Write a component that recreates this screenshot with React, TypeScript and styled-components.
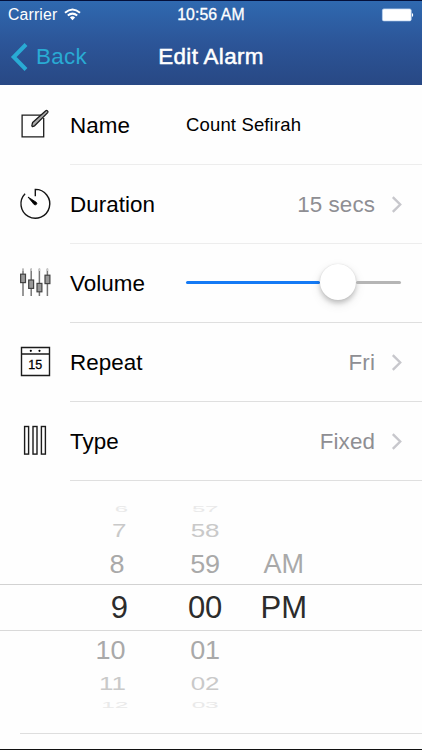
import React from "react";
import styled, { createGlobalStyle } from "styled-components";

const GlobalStyle = createGlobalStyle`
  * { box-sizing: border-box; }
  html, body { margin: 0; background: #fff; overflow: hidden; }
  body { font-family: "Liberation Sans", Arial, Helvetica, sans-serif; color: #000; }
  svg { display: block; flex: none; }
`;

const Screen = styled.main`
  width: 422px;
  height: 750px;
  display: flex;
  flex-direction: column;
  border-bottom: 1px solid #111;
  overflow: hidden;
  background: #fefefe;
`;

const Header = styled.header`
  height: 85px;
  flex: none;
  border-top: 1px solid #04103a;
  background: linear-gradient(#2f69b0, #2c5598 50%, #284884);
  color: #fff;
`;

const StatusBar = styled.div`
  height: 28px;
  display: grid;
  grid-template-columns: 1fr auto 1fr;
  align-items: center;
  padding: 0 8px;
  font-size: 15.8px;
  line-height: 20px;
`;

const Carrier = styled.div`
  display: flex;
  align-items: center;
  gap: 7px;
  letter-spacing: 0.15px;

  svg {
    margin-bottom: 2px;
  }
`;

const Clock = styled.time`
  -webkit-text-stroke: 0.3px #fff;
  letter-spacing: 0.1px;
`;

const Battery = styled.div`
  justify-self: end;
`;

const NavBar = styled.nav`
  height: 56px;
  display: grid;
  grid-template-columns: 1fr auto 1fr;
  align-items: center;
  padding: 0 10px;
`;

const BackButton = styled.button`
  display: flex;
  align-items: center;
  gap: 8px;
  padding: 0;
  border: 0;
  background: none;
  color: #29abd4;
  font: 22.4px/28px "Liberation Sans", Arial, sans-serif;
  letter-spacing: 0.3px;
`;

const Title = styled.h1`
  margin: 0;
  font-size: 22.4px;
  line-height: 28px;
  font-weight: 400;
  letter-spacing: 0.35px;
  -webkit-text-stroke: 0.5px #fff;
`;

const Row = styled.section<{ $height: number }>`
  height: ${(p) => p.$height}px;
  flex: none;
  display: grid;
  grid-template-columns: 70px 1fr;
`;

const IconCell = styled.div`
  display: flex;
  align-items: center;
  padding: 0 0 1px 17px;
`;

const RowBody = styled.div<{ $line: string }>`
  display: flex;
  align-items: center;
  border-bottom: 1.4px solid ${(p) => p.$line};
  padding-right: 20px;
`;

const Label = styled.div`
  width: 116px;
  font-size: 22.4px;
  line-height: 28px;
  letter-spacing: 0.05px;
  padding-top: 2px;
`;

const NameValue = styled.div`
  font-size: 18.5px;
  line-height: 24px;
  letter-spacing: 0.15px;
`;

const Detail = styled.div`
  margin-left: auto;
  display: flex;
  align-items: center;
  gap: 16px;
  padding-top: 2px;
  color: #8e8e93;
  font-size: 22.4px;
  line-height: 28px;
  letter-spacing: 0.1px;

  svg {
    margin-bottom: 1px;
  }
`;

const Slider = styled.div`
  width: 215px;
  height: 38px;
  display: flex;
  align-items: center;
  padding-bottom: 2px;
`;

const Track = styled.div<{ $width: number; $color: string }>`
  width: ${(p) => p.$width}px;
  height: 3px;
  border-radius: 2px;
  background: ${(p) => p.$color};
`;

const Knob = styled.div`
  width: 36px;
  height: 36px;
  flex: none;
  border-radius: 50%;
  background: #fff;
  box-shadow: 0 3px 5px rgba(0, 0, 0, 0.2), 0 4px 12px rgba(0, 0, 0, 0.09), 0 0 1px rgba(0, 0, 0, 0.15);
`;

const Picker = styled.section`
  height: 252px;
  flex: none;
  padding-top: 19px;
`;

const PickerRow = styled.div<{ $height: number; $color: string; $size: number; $selected?: boolean }>`
  height: ${(p) => p.$height}px;
  display: grid;
  grid-template-columns: 140px 130px 152px;
  grid-template-rows: 100%;
  align-items: center;
  color: ${(p) => p.$color};
  font-size: ${(p) => p.$size}px;
  line-height: 1;
  border-top: ${(p) => (p.$selected ? "1px solid #d2d2d2" : "0")};
  border-bottom: ${(p) => (p.$selected ? "1px solid #d9d9d9" : "0")};
`;

const Hour = styled.div<{ $inset: number; $squash: number }>`
  justify-self: end;
  padding-right: ${(p) => p.$inset}px;
  transform: scaleY(${(p) => p.$squash});
`;

const Minute = styled.div<{ $squash: number }>`
  justify-self: center;
  letter-spacing: -0.3px;
  transform: scaleY(${(p) => p.$squash});
`;

const Meridiem = styled.div<{ $shift: number }>`
  margin-left: ${(p) => p.$shift}px;
`;

const BottomLine = styled.hr`
  width: 402px;
  height: 1px;
  margin: 0 0 0 20px;
  border: 0;
  background: #dedede;
  flex: none;
`;

const WifiIcon = () => (
  <svg width="17" height="13" viewBox="0 0 17 13" fill="none" stroke="#fff" strokeWidth="2">
    <path d="M1 4.7Q8.5-1.8 16 4.7M3.8 7.6Q8.5 3.7 13.2 7.6" />
    <path d="M5.9 9.5Q8.5 7.2 11.1 9.5L8.5 12.3Z" fill="#fff" stroke="none" />
  </svg>
);

const BatteryIcon = () => (
  <svg width="33" height="14" viewBox="0 0 33 14">
    <rect x="1.4" y=".9" width="28.8" height="12" rx="1.5" fill="#fff" stroke="#bdd6f0" strokeWidth=".7" />
    <path d="M31 5q1.2.5 1.2 2t-1.2 2z" fill="#fff" />
  </svg>
);

const Chevron = () => (
  <svg width="11" height="17" viewBox="0 0 11 17" fill="none" stroke="#c7c7cc" strokeWidth="2.4">
    <path d="m1.8 1.2 7.4 7.3-7.4 7.3" />
  </svg>
);

const EditIcon = () => (
  <svg width="36" height="36" viewBox="0 0 36 36" fill="none" stroke="#1b1b1b" strokeWidth="1.3">
    <path d="M25.2 8.2H5.1v21.6h21.6V11" />
    <path d="m15 17.7.6-2.1L28.8 3.7q.8-.6 1.7.2.9.9.2 1.7L17.6 18.8l-2.2.8q-.9-.6-.4-1.9Z" fill="#aaa" strokeLinejoin="round" />
  </svg>
);

const TimerIcon = () => (
  <svg width="36" height="36" viewBox="0 0 36 36" fill="none">
    <path d="M18.3 10.2V3.4a14.4 14.4 0 1 1-10.2 4.3" stroke="#151515" strokeWidth="1.4" />
    <path d="m11 11 8.3 5.3q1 1 .2 2t-2.4.2Z" fill="#000" stroke="#000" strokeWidth=".8" />
  </svg>
);

const MixerIcon = () => (
  <svg width="36" height="36" viewBox="0 0 36 36" fill="none">
    <path d="M6 4v27M14.2 4v27M22.4 4v27M30.4 4v27" stroke="#777" strokeWidth="1.5" />
    <path d="M6 3v3M14.2 3v3M22.4 3v3M30.4 3v3" stroke="#c8c8c8" strokeWidth="1.5" />
    <g fill="#999" stroke="#444" strokeWidth="1.2">
      <rect x="3.6" y="9.2" width="4.9" height="8.4" />
      <rect x="11.7" y="15" width="4.9" height="8.4" />
      <rect x="20" y="18.4" width="4.9" height="8.4" />
      <rect x="28" y="10.2" width="4.9" height="8.4" />
    </g>
  </svg>
);

const CalendarIcon = () => (
  <svg width="36" height="36" viewBox="0 0 36 36">
    <path d="M4.5 3.5h28v28h-28zM4.5 10h28" fill="none" stroke="#1b1b1b" strokeWidth="1.4" />
    <circle cx="13.8" cy="6.8" r="1.1" /><circle cx="22.5" cy="6.8" r="1.1" />
    <text x="18.2" y="24.6" textAnchor="middle" fontSize="12.5" stroke="#000" strokeWidth=".3">15</text>
  </svg>
);

const BarsIcon = () => (
  <svg width="36" height="36" viewBox="0 0 36 36" fill="none" stroke="#1b1b1b" strokeWidth="1.4">
    <rect x="7.6" y="3.5" width="4" height="27.6" />
    <rect x="16" y="3.5" width="4" height="27.6" />
    <rect x="24.4" y="3.5" width="4" height="27.6" />
  </svg>
);

const times = [
  { hour: "6", minute: "57", height: 17, size: 24, squash: 0.38, color: "#e9e9e9", inset: 12 },
  { hour: "7", minute: "58", height: 28, size: 26, squash: 0.72, color: "#c9c9c9", inset: 13.5 },
  { hour: "8", minute: "59", height: 39, size: 27, squash: 0.96, color: "#a9a9a9", inset: 15.5 },
  { hour: "9", minute: "00", height: 47, size: 31, squash: 1, color: "#2c2c2c", inset: 12, selected: true },
  { hour: "10", minute: "01", height: 39, size: 27, squash: 0.96, color: "#a9a9a9", inset: 14.5 },
  { hour: "11", minute: "02", height: 28, size: 26, squash: 0.72, color: "#c9c9c9", inset: 14 },
  { hour: "12", minute: "03", height: 14, size: 24.5, squash: 0.38, color: "#e9e9e9", inset: 11.5 },
];

export default function App() {
  return (
    <>
      <GlobalStyle />
      <Screen>
        <Header>
          <StatusBar>
            <Carrier>Carrier<WifiIcon /></Carrier>
            <Clock>10:56 AM</Clock>
            <Battery><BatteryIcon /></Battery>
          </StatusBar>
          <NavBar>
            <BackButton>
              <svg width="18" height="28" viewBox="0 0 18 28" fill="none" stroke="currentColor" strokeWidth="4">
                <path d="M16 1.5 3.7 14 16 26.5" />
              </svg>
              Back
            </BackButton>
            <Title>Edit Alarm</Title>
          </NavBar>
        </Header>
        <Row $height={80}>
          <IconCell><EditIcon /></IconCell>
          <RowBody $line="#ededed"><Label>Name</Label><NameValue>Count Sefirah</NameValue></RowBody>
        </Row>
        <Row $height={79}>
          <IconCell><TimerIcon /></IconCell>
          <RowBody $line="#ededed"><Label>Duration</Label><Detail>15 secs<Chevron /></Detail></RowBody>
        </Row>
        <Row $height={79}>
          <IconCell><MixerIcon /></IconCell>
          <RowBody $line="#dfdfdf">
            <Label>Volume</Label>
            <Slider>
              <Track $width={134} $color="#147af5" />
              <Knob />
              <Track $width={45} $color="#b5b5b5" />
            </Slider>
          </RowBody>
        </Row>
        <Row $height={79}>
          <IconCell><CalendarIcon /></IconCell>
          <RowBody $line="#dfdfdf"><Label>Repeat</Label><Detail>Fri<Chevron /></Detail></RowBody>
        </Row>
        <Row $height={79}>
          <IconCell><BarsIcon /></IconCell>
          <RowBody $line="#dfdfdf"><Label>Type</Label><Detail>Fixed<Chevron /></Detail></RowBody>
        </Row>
        <Picker>
          {times.map((t) => (
            <PickerRow key={t.hour} $height={t.height} $color={t.color} $size={t.size} $selected={t.selected}>
              <Hour $inset={t.inset} $squash={t.squash}>{t.hour}</Hour>
              <Minute $squash={t.squash}>{t.minute}</Minute>
              {t.hour === "8" && <Meridiem $shift={-6.5}>AM</Meridiem>}
              {t.selected && <Meridiem $shift={-9.5}>PM</Meridiem>}
            </PickerRow>
          ))}
        </Picker>
        <BottomLine />
      </Screen>
    </>
  );
}
